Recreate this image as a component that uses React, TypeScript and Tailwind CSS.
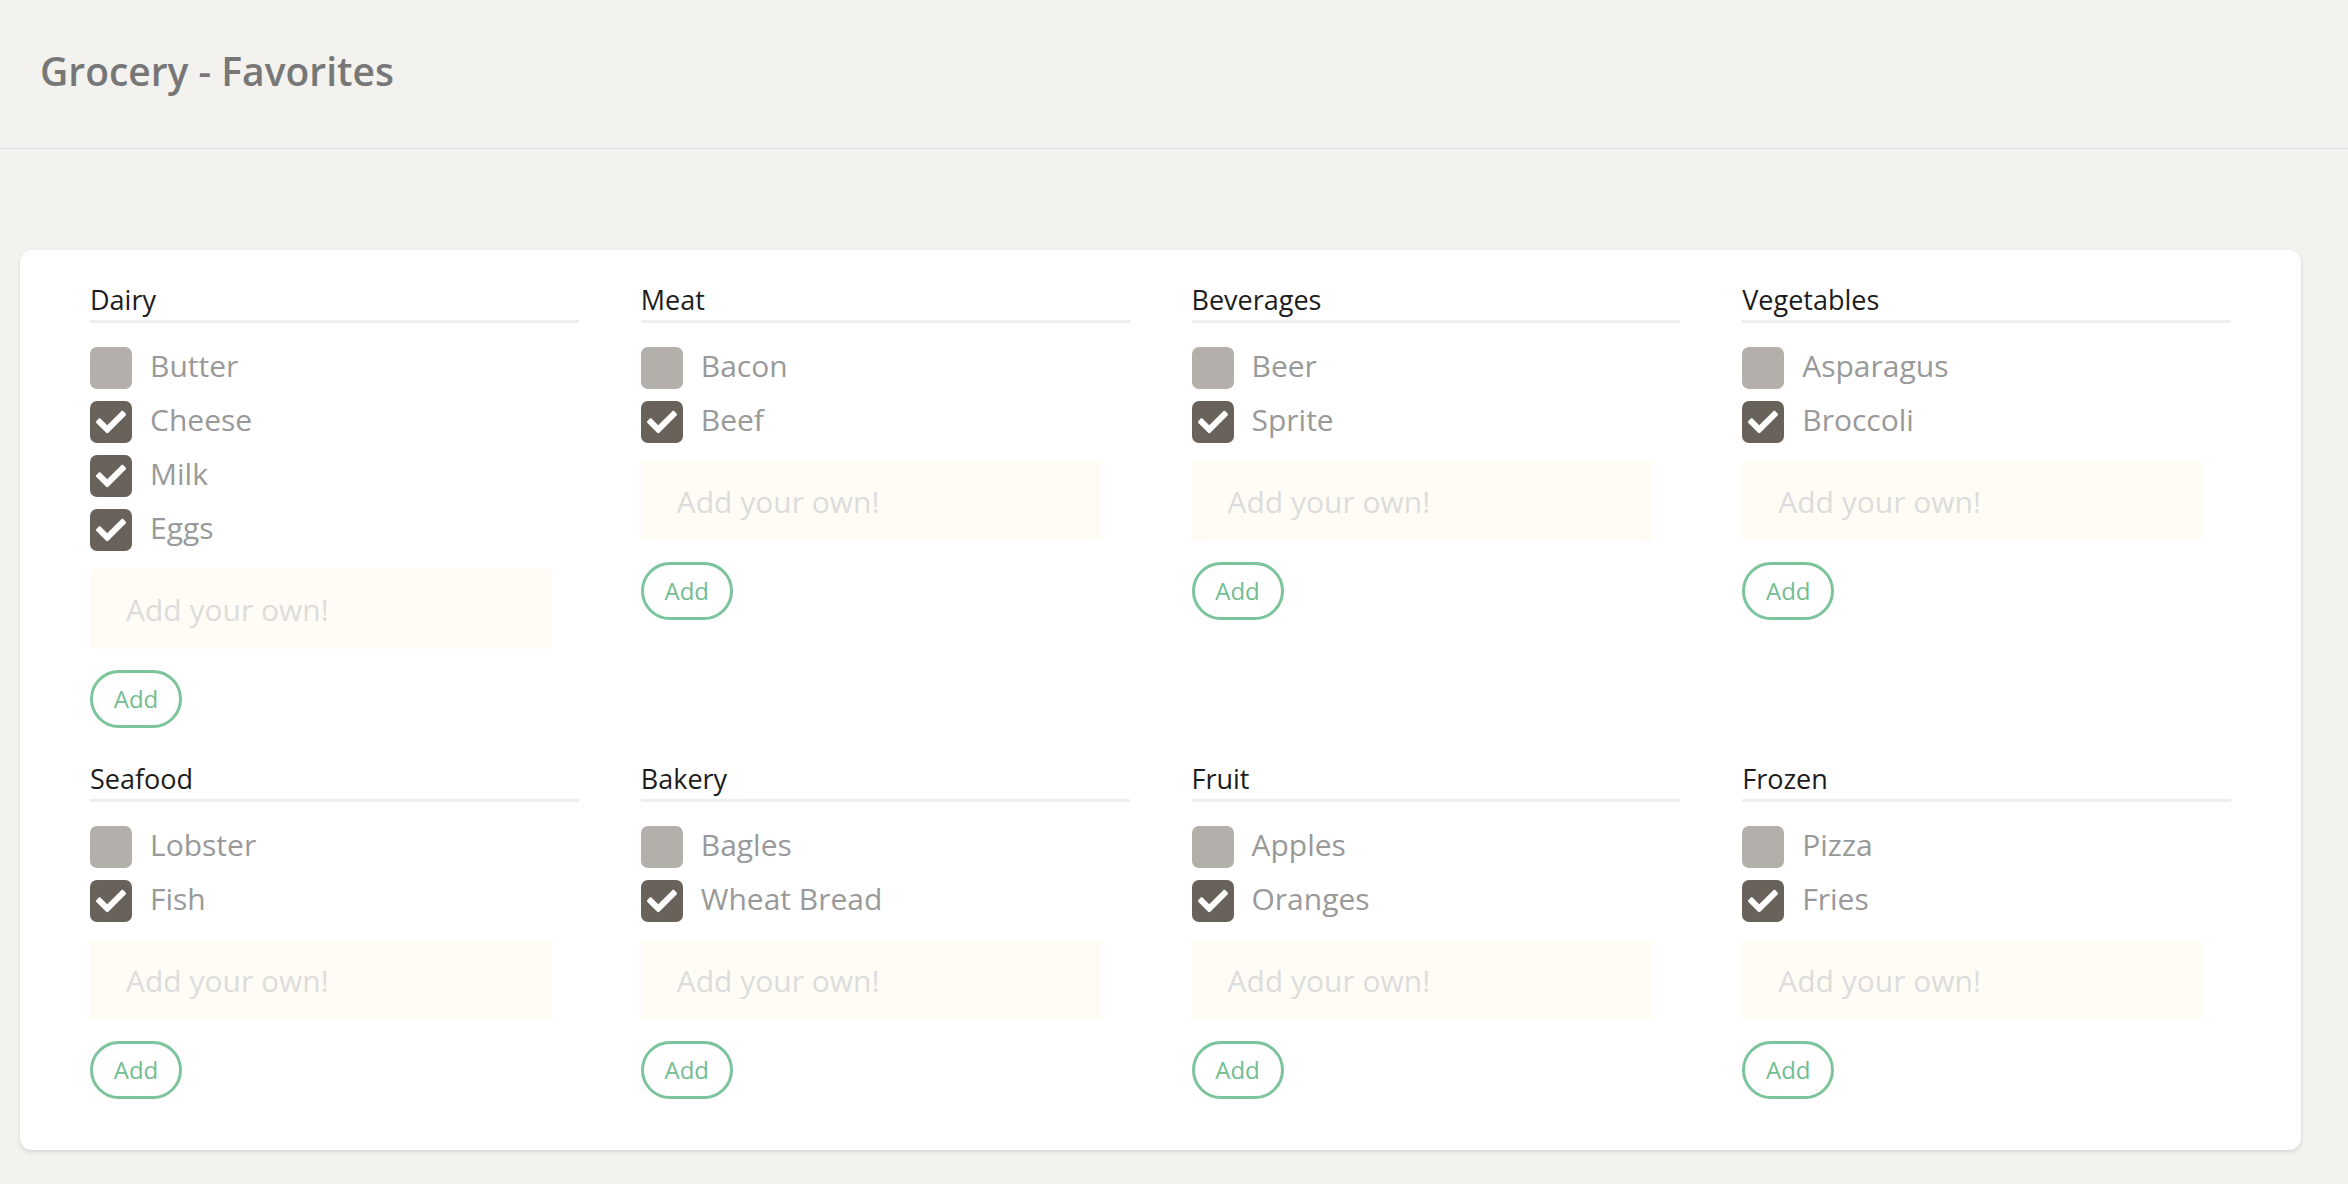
import { useState } from "react";

interface Category {
  name: string;
  items: { label: string; checked: boolean }[];
}

const initial: Category[] = [
  { name: "Dairy", items: [
    { label: "Butter", checked: false },
    { label: "Cheese", checked: true },
    { label: "Milk", checked: true },
    { label: "Eggs", checked: true },
  ] },
  { name: "Meat", items: [
    { label: "Bacon", checked: false },
    { label: "Beef", checked: true },
  ] },
  { name: "Beverages", items: [
    { label: "Beer", checked: false },
    { label: "Sprite", checked: true },
  ] },
  { name: "Vegetables", items: [
    { label: "Asparagus", checked: false },
    { label: "Broccoli", checked: true },
  ] },
  { name: "Seafood", items: [
    { label: "Lobster", checked: false },
    { label: "Fish", checked: true },
  ] },
  { name: "Bakery", items: [
    { label: "Bagles", checked: false },
    { label: "Wheat Bread", checked: true },
  ] },
  { name: "Fruit", items: [
    { label: "Apples", checked: false },
    { label: "Oranges", checked: true },
  ] },
  { name: "Frozen", items: [
    { label: "Pizza", checked: false },
    { label: "Fries", checked: true },
  ] },
];

function Check() {
  return (
    <svg viewBox="0 0 512 512" className="w-[30px] h-[30px]" fill="#ffffff">
      <path d="M173.898 439.404l-166.4-166.4c-9.997-9.997-9.997-26.206 0-36.204l36.203-36.204c9.997-9.998 26.207-9.998 36.204 0L192 312.69 432.095 72.596c9.997-9.997 26.207-9.997 36.204 0l36.203 36.204c9.997 9.997 9.997 26.206 0 36.204l-294.4 294.401c-9.998 9.997-26.207 9.997-36.204-.001z" />
    </svg>
  );
}

function CategoryBox({ cat, onToggle }: { cat: Category; onToggle: (i: number) => void }) {
  const [text, setText] = useState("");
  return (
    <div>
      <div className="text-[27px] leading-[40px] text-[#1c1c1c] border-b-[3px] border-[#eeeeee]">{cat.name}</div>
      <div className="mt-[24px] flex flex-col gap-[12px]">
        {cat.items.map((it, i) => (
          <label key={it.label} className="flex items-center h-[42px] cursor-pointer" onClick={() => onToggle(i)}>
            <span
              className={`w-[42px] h-[42px] rounded-[7px] flex items-center justify-center shrink-0 ${it.checked ? "bg-[#69625b]" : "bg-[#b3afab]"}`}
            >
              {it.checked && <Check />}
            </span>
            <span className="ml-[18px] pb-[6px] text-[30px] text-[#999999]">{it.label}</span>
          </label>
        ))}
      </div>
      <input
        value={text}
        onChange={(e) => setText(e.target.value)}
        placeholder="Add your own!"
        className="mt-[18px] block w-[461px] h-[80px] rounded-[4px] bg-[#fffcf5] px-[36px] text-[30px] text-[#666666] placeholder:text-[#dcdcdc] outline-none"
      />
      <button className="mt-[21px] h-[58px] w-[92px] rounded-full border-[3px] border-[#7cc49b] text-[24px] text-[#72bd91] bg-white">
        Add
      </button>
    </div>
  );
}

export default function App() {
  const [cats, setCats] = useState(initial);

  const toggle = (ci: number, ii: number) =>
    setCats((cs) =>
      cs.map((c, i) =>
        i !== ci ? c : { ...c, items: c.items.map((it, j) => (j === ii ? { ...it, checked: !it.checked } : it)) }
      )
    );

  return (
    <div className="min-h-[1184px] bg-[#f3f2ee] font-['Open_Sans',sans-serif]">
      <header className="h-[149px] border-b border-[#dcdcdc] flex items-center pl-[40px] pb-[6px]">
        <h1 className="text-[39px] font-semibold text-[#777777]">Grocery - Favorites</h1>
      </header>
      <div className="ml-[20px] mt-[101px] w-[2281px] rounded-[12px] bg-white shadow-[0_2px_4px_rgba(0,0,0,0.12)] px-[70px] pt-[30px] pb-[51px]">
        <div className="grid grid-cols-4 gap-x-[62px] gap-y-[31px]">
          {cats.map((c, ci) => (
            <CategoryBox key={c.name} cat={c} onToggle={(ii) => toggle(ci, ii)} />
          ))}
        </div>
      </div>
    </div>
  );
}
